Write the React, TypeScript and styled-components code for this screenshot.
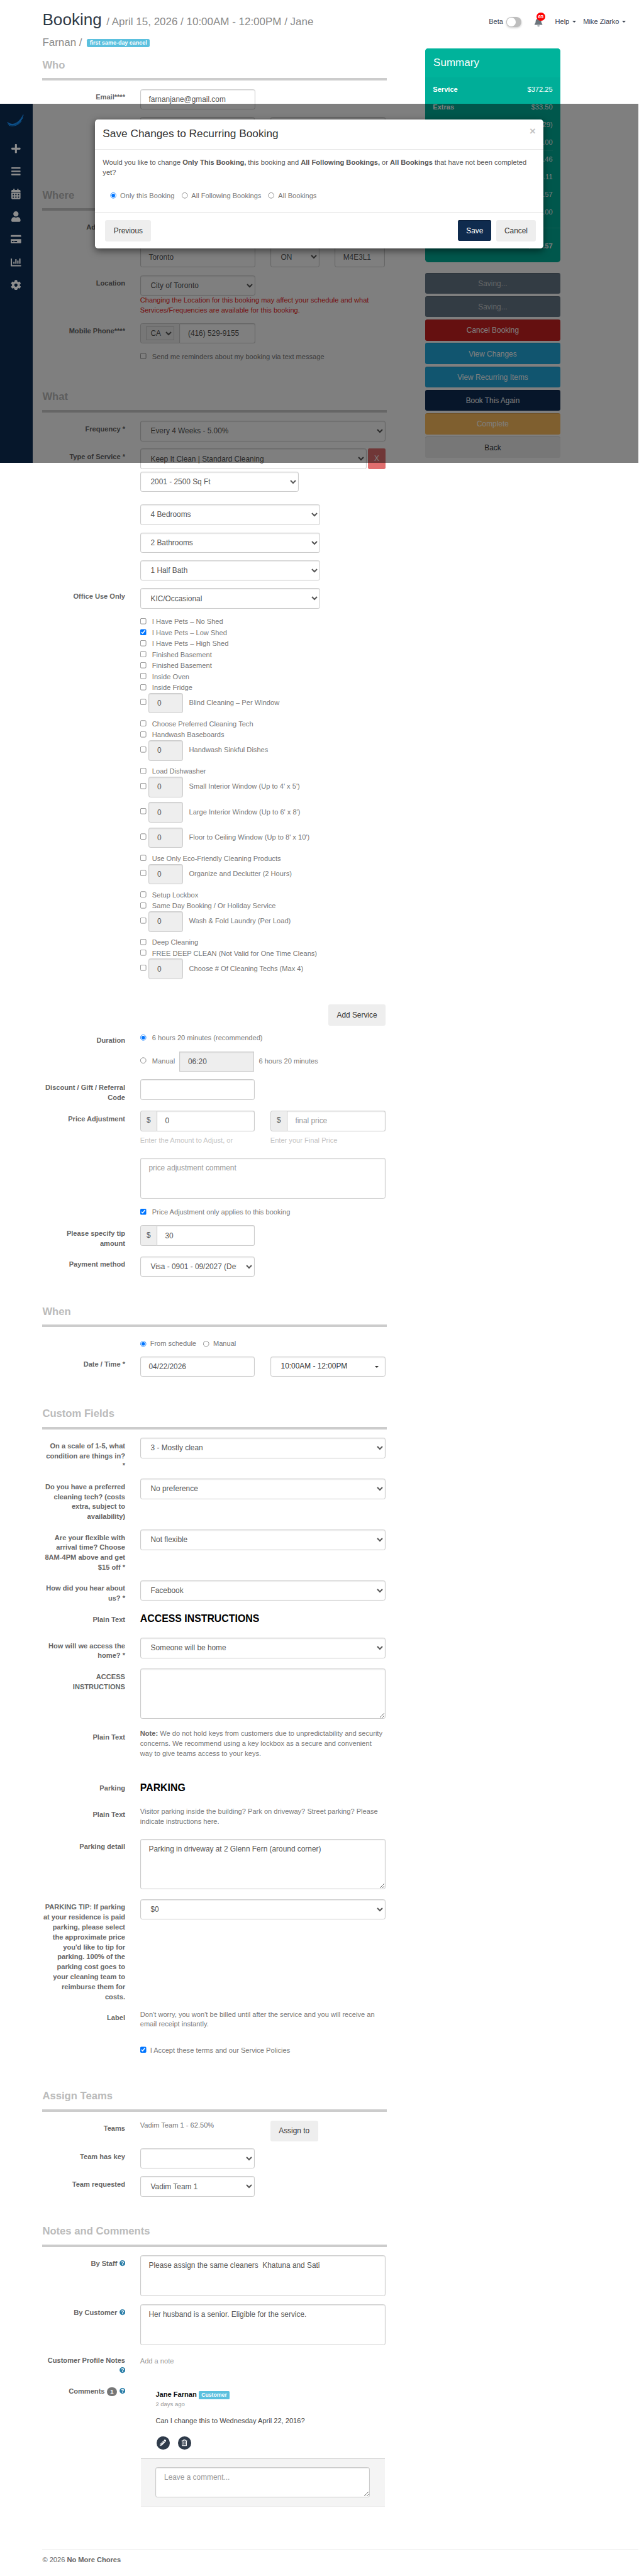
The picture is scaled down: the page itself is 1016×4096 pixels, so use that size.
import React from 'react'
import styled, { createGlobalStyle } from 'styled-components'
import {
  FaBars,
  FaBell,
  FaCalendarAlt,
  FaChartBar,
  FaCog,
  FaCreditCard,
  FaPencilAlt,
  FaPlus,
  FaQuestionCircle,
  FaRegTrashAlt,
  FaUser
} from 'react-icons/fa'

const GlobalStyle = createGlobalStyle`
  html, body {
    margin: 0;
    padding: 0;
    background: #fff;
  }
  body {
    font-family: "Liberation Sans", Arial, sans-serif;
    font-size: 14px;
    line-height: 20px;
    color: #555;
  }
  * {
    box-sizing: border-box;
  }
`

// everything below is measured in reference pixels, the zoom brings it to window size
const Page = styled.div`
  zoom: 0.793;
  position: relative;
  width: 1280px;
  height: 5161px;
  overflow: hidden;
  background: #fff;
`

const Header = styled.header`
  display: flex;
  justify-content: space-between;
  align-items: flex-start;
  height: 97px;
  padding: 22px 25px 0 85px;
`

const PageTitle = styled.h1`
  width: 570px;
  margin: 0;
  font-size: 33px;
  font-weight: 400;
  line-height: 36px;
  color: #2f3a46;
`

const TitleMeta = styled.small`
  font-size: 21.4px;
  color: #8a8a8a;
`

const TitleBadge = styled.span`
  display: inline-block;
  padding: 0 6px;
  height: 16px;
  line-height: 16px;
  font-size: 11.3px;
  font-weight: 700;
  color: #fff;
  background: #5bc0de;
  border-radius: 3px;
  vertical-align: 2px;
`

const TopNav = styled.nav`
  display: flex;
  align-items: center;
  height: 44px;
  color: #3c4452;
`

const Toggle = styled.span`
  position: relative;
  width: 31px;
  height: 21px;
  margin: 0 25px 0 6px;
  border-radius: 11px;
  background: #bdbdbd;
  box-shadow: 0 2px 4px rgba(0, 0, 0, 0.2);

  &::after {
    content: '';
    position: absolute;
    top: 2px;
    left: 2px;
    width: 17px;
    height: 17px;
    border-radius: 50%;
    background: #fff;
  }
`

const BellWrap = styled.span`
  position: relative;
  display: flex;
  width: 18px;
  margin-right: 24px;
  color: #6c757d;
`

const BellCount = styled.span`
  position: absolute;
  top: -10px;
  left: 5px;
  width: 17px;
  height: 17px;
  border-radius: 50%;
  background: #f00;
  color: #fff;
  font-size: 10px;
  font-weight: 700;
  line-height: 17px;
  text-align: center;
`

const NavLink = styled.span`
  display: inline-flex;
  align-items: center;
  margin-right: 14px;

  &:last-child {
    margin-right: 0;
  }

  &::after {
    content: '';
    margin-left: 6px;
    border-top: 4px solid #3c4452;
    border-left: 4px solid transparent;
    border-right: 4px solid transparent;
  }
`

const Layout = styled.div`
  display: flex;
  align-items: flex-start;
  padding-left: 85px;
`

const Main = styled.main`
  width: 691px;
  padding-top: 22.5px;
`

const SectionTitle = styled.h3<{ $top?: number }>`
  margin: ${(p) => p.$top ?? 0}px 0 14.5px;
  font-size: 21px;
  font-weight: 700;
  line-height: 23px;
  color: #bbb;
`

const Rule = styled.div`
  height: 5px;
  margin-bottom: 17px;
  background: #ccc;
`

const Row = styled.div<{ $mb?: number }>`
  display: grid;
  grid-template-columns: 166px 492px;
  column-gap: 30px;
  margin-bottom: ${(p) => p.$mb ?? 15}px;
`

const Label = styled.label<{ $flush?: boolean }>`
  display: block;
  padding-top: ${(p) => (p.$flush ? 0 : 7)}px;
  font-weight: 700;
  line-height: 20px;
  text-align: right;
  color: #666;
`

const HelpIcon = styled(FaQuestionCircle)`
  width: 12px;
  height: 14px;
  margin-left: 4px;
  color: #2b7ea8;
  vertical-align: -2px;
`

const CountBadge = styled.span`
  display: inline-block;
  width: 21px;
  height: 18px;
  margin-left: 4px;
  border-radius: 9px;
  background: #777;
  color: #fff;
  font-size: 12px;
  line-height: 18px;
  text-align: center;
`

const Split = styled.div`
  display: grid;
  grid-template-columns: 230px 231px;
  column-gap: 31px;
`

const CityGrid = styled.div`
  display: grid;
  grid-template-columns: 231px 99px 101px;
  column-gap: 30px;
`

const Input = styled.input<{ $width?: number }>`
  display: block;
  width: ${(p) => (p.$width ? `${p.$width}px` : '100%')};
  height: 41px;
  padding: 6px 16px;
  border: 1px solid #ccc;
  border-radius: 4px;
  background: #fff;
  box-shadow: inset 0 1px 2px rgba(0, 0, 0, 0.12);
  font: 15px "Liberation Sans", Arial, sans-serif;
  color: #555;

  &::placeholder {
    color: #999;
  }

  &:disabled {
    background: #eee;
    opacity: 1;
  }
`

const Select = styled.select<{ $width?: number }>`
  display: block;
  width: ${(p) => (p.$width ? `${p.$width}px` : '100%')};
  height: 41px;
  padding: 6px 16px;
  border: 1px solid #ccc;
  border-radius: 4px;
  background: #fff;
  box-shadow: inset 0 1px 2px rgba(0, 0, 0, 0.12);
  font: 15px "Liberation Sans", Arial, sans-serif;
  color: #555;
`

const Textarea = styled.textarea<{ $height: number; $resize?: boolean; $top?: number }>`
  display: block;
  width: 100%;
  height: ${(p) => p.$height}px;
  margin-top: ${(p) => p.$top ?? 0}px;
  padding: 10px 16px;
  border: 1px solid #ccc;
  border-radius: 4px;
  background: #fff;
  box-shadow: inset 0 1px 2px rgba(0, 0, 0, 0.12);
  font: 15px/20px "Liberation Sans", Arial, sans-serif;
  color: #555;
  resize: ${(p) => (p.$resize ? 'both' : 'none')};

  &::placeholder {
    color: #999;
  }
`

const InputGroup = styled.div<{ $width?: number }>`
  display: flex;
  width: ${(p) => (p.$width ? `${p.$width}px` : '100%')};
  height: 41px;

  ${Input} {
    flex: 1;
    min-width: 0;
    border-left: 0;
    border-radius: 0 4px 4px 0;
  }
`

const Addon = styled.span`
  display: flex;
  align-items: center;
  justify-content: center;
  width: 34px;
  border: 1px solid #ccc;
  border-radius: 4px 0 0 4px;
  background: #eee;
  font-size: 15px;
  color: #555;
`

const PhoneAddon = styled(Addon)`
  width: 80px;

  ${Select} {
    width: 56px;
    height: 28px;
    padding: 0 4px;
    border-radius: 0;
    box-shadow: none;
    background: #eee;
  }
`

const CheckLine = styled.label<{ $gap?: number; $top?: number }>`
  display: flex;
  align-items: center;
  min-height: 22px;
  margin-top: ${(p) => p.$top ?? 0}px;
  color: #777;

  input {
    flex: none;
    width: 13px;
    height: 13px;
    margin: -3px ${(p) => p.$gap ?? 11}px 0 0;
  }
`

const RadioGroup = styled.div<{ $top?: number }>`
  display: flex;
  align-items: center;
  height: 20px;
  margin-top: ${(p) => p.$top ?? 0}px;
  color: #777;

  label {
    display: flex;
    align-items: center;
    margin-right: 14px;
  }

  input {
    width: 13px;
    height: 13px;
    margin: 0 7px 0 0;
  }
`

const ExtraRow = styled.div`
  display: flex;
  align-items: center;
  margin: -1px 0 11px;
  color: #777;

  input[type='checkbox'] {
    flex: none;
    width: 13px;
    height: 13px;
    margin: -4px 4px 0 0;
  }

  ${Input} {
    width: 69px;
    margin-right: 12px;
  }
`

const AddServiceBar = styled.div`
  display: flex;
  justify-content: flex-end;
  width: 688px;
  margin: 39px 0 14px;
`

const GrayButton = styled.button<{ $height: number }>`
  height: ${(p) => p.$height}px;
  padding: 0 17px;
  border: 0;
  border-radius: 4px;
  background: #eee;
  font: 15px "Liberation Sans", Arial, sans-serif;
  color: #333;
`

const ManualRow = styled.div`
  display: flex;
  align-items: center;
  margin-top: 15px;
  color: #777;

  input[type='radio'] {
    width: 13px;
    height: 13px;
    margin: -4px 11px 0 0;
  }

  ${Input} {
    width: 150px;
    margin: 0 9px;
    border-radius: 0;
  }
`

const FreqGroup = styled.div`
  display: flex;
  gap: 3px;
`

const RemoveButton = styled.span`
  flex: none;
  display: flex;
  align-items: center;
  justify-content: center;
  width: 35px;
  height: 41px;
  border-radius: 3px;
  background: #e06e6e;
  color: #fff;
  font-size: 15px;
`

const ErrorText = styled.div`
  width: 480px;
  color: #e81a1a;
`

const HelpText = styled.div`
  margin-top: 9px;
  color: #c4c4c4;
`

const TimeDropdown = styled.div`
  display: flex;
  align-items: center;
  justify-content: space-between;
  height: 41px;
  padding: 0 13px 0 20px;
  border: 1px solid #ccc;
  border-radius: 4px;
  box-shadow: inset 0 1px 2px rgba(0, 0, 0, 0.12);
  font-size: 15px;
  color: #333;

  &::after {
    content: '';
    border-top: 4px solid #333;
    border-left: 4px solid transparent;
    border-right: 4px solid transparent;
  }
`

const StaticHeading = styled.h4`
  height: 38px;
  margin: 0;
  font-size: 20px;
  font-weight: 700;
  line-height: 30px;
  color: #000;
`

const StaticText = styled.div`
  color: #777;

  strong {
    color: #666;
  }
`

const TeamName = styled.div`
  color: #777;
`

const NoteLink = styled.div`
  margin-top: 8px;
  color: #999;
`

const Comment = styled.div`
  padding: 14px 0 0 31px;
`

const CommentAuthor = styled.div`
  display: flex;
  align-items: center;
  font-weight: 700;
  color: #111;
`

const CustomerBadge = styled.span`
  width: 62px;
  height: 17px;
  margin-left: 4px;
  border-radius: 2px;
  background: #5bc0de;
  color: #fff;
  font-size: 11px;
  line-height: 17px;
  text-align: center;
`

const CommentTime = styled.div`
  margin-top: -2px;
  font-size: 12px;
  color: #999;
`

const CommentBody = styled.div`
  margin-top: 14px;
  color: #444;
`

const CommentActions = styled.div`
  display: flex;
  gap: 17px;
  margin: 21px 0 18px 2px;
`

const RoundIcon = styled.span`
  display: flex;
  align-items: center;
  justify-content: center;
  width: 26px;
  height: 26px;
  border-radius: 50%;
  background: #2f3b4a;
  color: #fff;
  font-size: 13px;
`

const CommentBox = styled.div`
  width: 490px;
  margin-left: 1px;
  padding: 16px 30px 17px;
  border-top: 1px solid #ccc;
  border-bottom: 1px solid #eee;
  background: #f4f4f4;
`

const Aside = styled.aside`
  width: 270px;
  margin-left: 77px;
`

const Summary = styled.section`
  height: 429px;
  margin-bottom: 21px;
  border-radius: 6px;
  overflow: hidden;
  background: #00ae98;
  color: #fff;
`

const SummaryHead = styled.h3`
  display: flex;
  align-items: center;
  height: 58px;
  margin: 0;
  padding-left: 16px;
  background: #00b39b;
  font-size: 21.5px;
  font-weight: 400;
`

const SummaryBody = styled.div`
  padding-top: 7.5px;
`

const SummaryRow = styled.div<{ $divided?: boolean }>`
  display: flex;
  justify-content: space-between;
  height: 35.2px;
  margin: 0 15px;
  line-height: 35px;
  border-bottom: ${(p) => (p.$divided ? '1px solid rgba(255, 255, 255, 0.1)' : '0')};

  strong {
    font-weight: 700;
  }
`

const SummaryTotal = styled.div`
  display: flex;
  justify-content: space-between;
  margin-top: 12px;
  padding: 27px 15px 0;
  border-top: 1px solid rgba(255, 255, 255, 0.12);
  font-weight: 700;
`

const ActionStack = styled.div`
  display: flex;
  flex-direction: column;
  gap: 5px;
`

const ActionButton = styled.button<{ $bg: string; $fg?: string }>`
  height: 42px;
  border: 0;
  border-top: 1px solid rgba(0, 0, 0, 0.12);
  border-radius: 4px;
  background: ${(p) => p.$bg};
  font: 15px "Liberation Sans", Arial, sans-serif;
  color: ${(p) => p.$fg ?? '#fff'};
`

const Footer = styled.footer`
  margin: 85px 0 0 85px;
  padding-top: 11px;
  border-top: 1px solid #eee;
  color: #666;
`

const Backdrop = styled.div`
  position: absolute;
  top: 208px;
  left: 0;
  width: 100%;
  height: 720px;
  background: rgba(0, 0, 0, 0.5);
`

const Sidebar = styled.div`
  position: absolute;
  top: 208px;
  left: 0;
  display: flex;
  flex-direction: column;
  align-items: center;
  width: 65px;
  height: 720px;
  padding-top: 20px;
  background: #06172b;
  color: #8e8e8e;
`

const SideLogo = styled.svg`
  width: 36px;
  height: 26px;
  margin-bottom: 21px;
`

const SideItem = styled.span`
  display: flex;
  align-items: center;
  justify-content: center;
  height: 45.6px;
  font-size: 21px;
`

const Modal = styled.div`
  position: absolute;
  top: 239px;
  left: 191px;
  width: 898px;
  height: 259px;
  border-radius: 6px;
  background: #fff;
  box-shadow: 0 5px 15px rgba(0, 0, 0, 0.5);
`

const ModalHead = styled.div`
  display: flex;
  justify-content: space-between;
  height: 61px;
  padding: 15px 15px 0;
  border-bottom: 1px solid #e5e5e5;
`

const ModalTitle = styled.h4`
  margin: 0;
  font-size: 21.8px;
  font-weight: 400;
  line-height: 30px;
  color: #333;
`

const ModalClose = styled.span`
  font-size: 21px;
  font-weight: 700;
  line-height: 20px;
  color: #c4c4c4;
`

const ModalBody = styled.div`
  height: 125px;
  padding: 15px 15px 0;
  color: #555;
  line-height: 20.5px;

  strong {
    font-weight: 700;
  }
`

const ModalOptions = styled(RadioGroup)`
  margin: 26px 0 0 15px;
`

const ModalFoot = styled.div`
  display: flex;
  align-items: flex-start;
  padding: 15px 14px 0 20px;
  border-top: 1px solid #e5e5e5;
`

const SaveButton = styled.button`
  width: 67px;
  height: 42px;
  margin: 0 9px 0 auto;
  border: 0;
  border-top: 1px solid #0a1f3a;
  border-radius: 3px;
  background: #0f2b4e;
  font: 15px "Liberation Sans", Arial, sans-serif;
  color: #fff;
`

interface Extra {
  label: string
  qty?: boolean
  checked?: boolean
}

const extras: Extra[] = [
  { label: 'I Have Pets – No Shed' },
  { label: 'I Have Pets – Low Shed', checked: true },
  { label: 'I Have Pets – High Shed' },
  { label: 'Finished Basement' },
  { label: 'Finished Basement' },
  { label: 'Inside Oven' },
  { label: 'Inside Fridge' },
  { label: 'Blind Cleaning – Per Window', qty: true },
  { label: 'Choose Preferred Cleaning Tech' },
  { label: 'Handwash Baseboards' },
  { label: 'Handwash Sinkful Dishes', qty: true },
  { label: 'Load Dishwasher' },
  { label: "Small Interior Window (Up to 4' x 5')", qty: true },
  { label: "Large Interior Window (Up to 6' x 8')", qty: true },
  { label: "Floor to Ceiling Window (Up to 8' x 10')", qty: true },
  { label: 'Use Only Eco-Friendly Cleaning Products' },
  { label: 'Organize and Declutter (2 Hours)', qty: true },
  { label: 'Setup Lockbox' },
  { label: 'Same Day Booking / Or Holiday Service' },
  { label: 'Wash & Fold Laundry (Per Load)', qty: true },
  { label: 'Deep Cleaning' },
  { label: 'FREE DEEP CLEAN (Not Valid for One Time Cleans)' },
  { label: 'Choose # Of Cleaning Techs (Max 4)', qty: true }
]

const summaryRows = [
  { label: 'Service', value: '$372.25', strong: true },
  { label: 'Extras', value: '$33.50', strong: true },
  { label: 'Discount', value: '($20.29)' },
  { label: 'Tip', value: '$30.00', divided: true },
  { label: 'Subtotal', value: '$415.46' },
  { label: 'Tax', value: '$54.11' },
  { label: 'Total', value: '$469.57' },
  { label: 'Paid', value: '$0.00' }
]

const actions = [
  { label: 'Saving...', bg: '#667888', fg: '#c8ccd0' },
  { label: 'Saving...', bg: '#667888', fg: '#c8ccd0' },
  { label: 'Cancel Booking', bg: '#ca2121' },
  { label: 'View Changes', bg: '#22aade' },
  { label: 'View Recurring Items', bg: '#22aade' },
  { label: 'Book This Again', bg: '#0e2c54' },
  { label: 'Complete', bg: '#ffbe5e' },
  { label: 'Back', bg: '#eee', fg: '#333' }
]

const SelectOf: React.FC<{ value: string; width?: number }> = ({ value, width }) => (
  <Select $width={width} defaultValue={value}>
    <option>{value}</option>
  </Select>
)

const Section: React.FC<{ title: string; top?: number }> = ({ title, top }) => (
  <>
    <SectionTitle $top={top}>{title}</SectionTitle>
    <Rule />
  </>
)

export default function App() {
  return (
    <Page>
      <GlobalStyle />
      <Header>
        <PageTitle>
          Booking <TitleMeta>/ April 15, 2026 / 10:00AM - 12:00PM / Jane Farnan /</TitleMeta>{' '}
          <TitleBadge>first same-day cancel</TitleBadge>
        </PageTitle>
        <TopNav>
          Beta
          <Toggle />
          <BellWrap>
            <FaBell size={18} />
            <BellCount>65</BellCount>
          </BellWrap>
          <NavLink>Help</NavLink>
          <NavLink>Mike Ziarko</NavLink>
        </TopNav>
      </Header>

      <Layout>
        <Main>
          <Section title="Who" />
          <Row>
            <Label>Email****</Label>
            <Input $width={231} defaultValue="farnanjane@gmail.com" />
          </Row>
          <Row $mb={0}>
            <Label>Name</Label>
            <Split>
              <Input defaultValue="Jane" />
              <Input defaultValue="Farnan" />
            </Split>
          </Row>

          <Section title="Where" top={104.5} />
          <Row $mb={14}>
            <Label>Address****</Label>
            <Input defaultValue="1 Main Street" />
          </Row>
          <Row $mb={16}>
            <Label />
            <CityGrid>
              <Input defaultValue="Toronto" />
              <SelectOf value="ON" />
              <Input defaultValue="M4E3L1" />
            </CityGrid>
          </Row>
          <Row>
            <Label>Location</Label>
            <div>
              <SelectOf value="City of Toronto" width={231} />
              <ErrorText>
                Changing the Location for this booking may affect your schedule and what
                Services/Frequencies are available for this booking.
              </ErrorText>
            </div>
          </Row>
          <Row $mb={17}>
            <Label>Mobile Phone****</Label>
            <InputGroup $width={231}>
              <PhoneAddon>
                <SelectOf value="CA" />
              </PhoneAddon>
              <Input defaultValue="(416) 529-9155" />
            </InputGroup>
          </Row>
          <Row $mb={0}>
            <Label $flush />
            <CheckLine $top={-1}>
              <input type="checkbox" />
              Send me reminders about my booking via text message
            </CheckLine>
          </Row>

          <Section title="What" top={57.5} />
          <Row>
            <Label>Frequency *</Label>
            <SelectOf value="Every 4 Weeks - 5.00%" />
          </Row>
          <Row $mb={5}>
            <Label>Type of Service *</Label>
            <FreqGroup>
              <SelectOf value="Keep It Clean | Standard Cleaning" />
              <RemoveButton>X</RemoveButton>
            </FreqGroup>
          </Row>
          <Row $mb={25}>
            <Label />
            <SelectOf value="2001 - 2500 Sq Ft" width={318} />
          </Row>
          <Row>
            <Label />
            <SelectOf value="4 Bedrooms" width={361} />
          </Row>
          <Row>
            <Label />
            <SelectOf value="2 Bathrooms" width={361} />
          </Row>
          <Row>
            <Label />
            <SelectOf value="1 Half Bath" width={361} />
          </Row>
          <Row $mb={16}>
            <Label>Office Use Only</Label>
            <SelectOf value="KIC/Occasional" width={361} />
          </Row>
          <Row $mb={0}>
            <Label $flush />
            <div>
              {extras.map((extra, i) =>
                extra.qty ? (
                  <ExtraRow key={i}>
                    <input type="checkbox" />
                    <Input disabled defaultValue="0" />
                    {extra.label}
                  </ExtraRow>
                ) : (
                  <CheckLine key={i}>
                    <input type="checkbox" defaultChecked={extra.checked} />
                    {extra.label}
                  </CheckLine>
                )
              )}
            </div>
          </Row>
          <AddServiceBar>
            <GrayButton $height={43}>Add Service</GrayButton>
          </AddServiceBar>

          <Row>
            <Label>Duration</Label>
            <div>
              <CheckLine $top={1}>
                <input type="radio" name="duration" defaultChecked />6 hours 20 minutes (recommended)
              </CheckLine>
              <ManualRow>
                <input type="radio" name="duration" />
                Manual
                <Input disabled defaultValue="06:20" />6 hours 20 minutes
              </ManualRow>
            </div>
          </Row>
          <Row $mb={16}>
            <Label>Discount / Gift / Referral Code</Label>
            <Input $width={230} />
          </Row>
          <Row>
            <Label>Price Adjustment</Label>
            <div>
              <Split>
                <div>
                  <InputGroup>
                    <Addon>$</Addon>
                    <Input defaultValue="0" />
                  </InputGroup>
                  <HelpText>Enter the Amount to Adjust, or</HelpText>
                </div>
                <div>
                  <InputGroup>
                    <Addon>$</Addon>
                    <Input placeholder="final price" />
                  </InputGroup>
                  <HelpText>Enter your Final Price</HelpText>
                </div>
              </Split>
              <Textarea $height={81} $top={25} placeholder="price adjustment comment" />
              <CheckLine $top={17}>
                <input type="checkbox" defaultChecked />
                Price Adjustment only applies to this booking
              </CheckLine>
            </div>
          </Row>
          <Row>
            <Label>Please specify tip amount</Label>
            <InputGroup $width={230}>
              <Addon>$</Addon>
              <Input defaultValue="30" />
            </InputGroup>
          </Row>
          <Row $mb={0}>
            <Label>Payment method</Label>
            <SelectOf value="Visa - 0901 - 09/2027 (Default)" width={230} />
          </Row>

          <Section title="When" top={58.5} />
          <Row $mb={15}>
            <Label $flush />
            <RadioGroup $top={7}>
              <label>
                <input type="radio" name="when" defaultChecked />
                From schedule
              </label>
              <label>
                <input type="radio" name="when" />
                Manual
              </label>
            </RadioGroup>
          </Row>
          <Row $mb={0}>
            <Label>Date / Time *</Label>
            <Split>
              <Input defaultValue="04/22/2026" />
              <TimeDropdown>10:00AM - 12:00PM</TimeDropdown>
            </Split>
          </Row>

          <Section title="Custom Fields" top={62.5} />
          <Row>
            <Label>On a scale of 1-5, what condition are things in? *</Label>
            <SelectOf value="3 - Mostly clean" />
          </Row>
          <Row>
            <Label>
              Do you have a preferred cleaning tech? (costs extra, subject to availability)
            </Label>
            <SelectOf value="No preference" />
          </Row>
          <Row>
            <Label>Are your flexible with arrival time? Choose 8AM-4PM above and get $15 off *</Label>
            <SelectOf value="Not flexible" />
          </Row>
          <Row>
            <Label>How did you hear about us? *</Label>
            <SelectOf value="Facebook" />
          </Row>
          <Row>
            <Label>Plain Text</Label>
            <StaticHeading>ACCESS INSTRUCTIONS</StaticHeading>
          </Row>
          <Row>
            <Label>How will we access the home? *</Label>
            <SelectOf value="Someone will be home" />
          </Row>
          <Row $mb={20}>
            <Label>ACCESS INSTRUCTIONS</Label>
            <Textarea $height={101} $resize />
          </Row>
          <Row $mb={43}>
            <Label>Plain Text</Label>
            <StaticText>
              <strong>Note:</strong> We do not hold keys from customers due to unpredictability and
              security concerns. We recommend using a key lockbox as a secure and convenient way to
              give teams access to your keys.
            </StaticText>
          </Row>
          <Row>
            <Label>Parking</Label>
            <StaticHeading>PARKING</StaticHeading>
          </Row>
          <Row $mb={24}>
            <Label>Plain Text</Label>
            <StaticText>
              Visitor parking inside the building? Park on driveway? Street parking? Please indicate
              instructions here.
            </StaticText>
          </Row>
          <Row $mb={20}>
            <Label>Parking detail</Label>
            <Textarea
              $height={101}
              $resize
              defaultValue="Parking in driveway at 2 Glenn Fern (around corner)"
            />
          </Row>
          <Row>
            <Label>
              PARKING TIP: If parking at your residence is paid parking, please select the
              approximate price you'd like to tip for parking. 100% of the parking cost goes to your
              cleaning team to reimburse them for costs.
            </Label>
            <SelectOf value="$0" />
          </Row>
          <Row $mb={31}>
            <Label>Label</Label>
            <StaticText>
              Don't worry, you won't be billed until after the service and you will receive an email
              receipt instantly.
            </StaticText>
          </Row>
          <Row $mb={0}>
            <Label $flush />
            <CheckLine $gap={7}>
              <input type="checkbox" defaultChecked />I Accept these terms and our Service Policies
            </CheckLine>
          </Row>

          <Section title="Assign Teams" top={69.5} />
          <Row $mb={14}>
            <Label>Teams</Label>
            <Split>
              <TeamName>Vadim Team 1 - 62.50%</TeamName>
              <div>
                <GrayButton $height={42}>Assign to</GrayButton>
              </div>
            </Split>
          </Row>
          <Row>
            <Label>Team has key</Label>
            <SelectOf value="" width={230} />
          </Row>
          <Row $mb={0}>
            <Label>Team requested</Label>
            <SelectOf value="Vadim Team 1" width={230} />
          </Row>

          <Section title="Notes and Comments" top={58.5} />
          <Row $mb={16}>
            <Label>
              By Staff
              <HelpIcon />
            </Label>
            <Textarea $height={82} defaultValue="Please assign the same cleaners  Khatuna and Sati" />
          </Row>
          <Row $mb={14}>
            <Label>
              By Customer
              <HelpIcon />
            </Label>
            <Textarea $height={82} defaultValue="Her husband is a senior. Eligible for the service." />
          </Row>
          <Row>
            <Label>
              Customer Profile Notes
              <HelpIcon />
            </Label>
            <NoteLink>Add a note</NoteLink>
          </Row>
          <Row $mb={0}>
            <Label>
              Comments
              <CountBadge>1</CountBadge>
              <HelpIcon />
            </Label>
            <div>
              <Comment>
                <CommentAuthor>
                  Jane Farnan
                  <CustomerBadge>Customer</CustomerBadge>
                </CommentAuthor>
                <CommentTime>2 days ago</CommentTime>
                <CommentBody>Can I change this to Wednesday April 22, 2016?</CommentBody>
                <CommentActions>
                  <RoundIcon>
                    <FaPencilAlt />
                  </RoundIcon>
                  <RoundIcon>
                    <FaRegTrashAlt />
                  </RoundIcon>
                </CommentActions>
              </Comment>
              <CommentBox>
                <Textarea $height={61} $resize placeholder="Leave a comment..." />
              </CommentBox>
            </div>
          </Row>
        </Main>

        <Aside>
          <Summary>
            <SummaryHead>Summary</SummaryHead>
            <SummaryBody>
              {summaryRows.map((row) => (
                <SummaryRow key={row.label} $divided={row.divided}>
                  {row.strong ? <strong>{row.label}</strong> : <span>{row.label}</span>}
                  <span>{row.value}</span>
                </SummaryRow>
              ))}
              <SummaryTotal>
                <span>Balance</span>
                <span>$469.57</span>
              </SummaryTotal>
            </SummaryBody>
          </Summary>
          <ActionStack>
            {actions.map((action, i) => (
              <ActionButton key={i} $bg={action.bg} $fg={action.fg}>
                {action.label}
              </ActionButton>
            ))}
          </ActionStack>
        </Aside>
      </Layout>

      <Footer>
        © 2026 <strong>No More Chores</strong>
      </Footer>

      <Backdrop />

      <Sidebar>
        <SideLogo viewBox="0 0 36 26" fill="none">
          <path d="M1 17c7 7 22 6 32-15" stroke="#0f4f8a" strokeWidth="1.6" />
          <path d="M2 20c8 5 21 3 30-13" stroke="#0d5f9e" strokeWidth="1.4" />
          <path d="M4 23c8 3 18 1 25-9" stroke="#0b4a80" strokeWidth="1.4" />
        </SideLogo>
        <SideItem>
          <FaPlus />
        </SideItem>
        <SideItem>
          <FaBars />
        </SideItem>
        <SideItem>
          <FaCalendarAlt />
        </SideItem>
        <SideItem>
          <FaUser />
        </SideItem>
        <SideItem>
          <FaCreditCard />
        </SideItem>
        <SideItem>
          <FaChartBar />
        </SideItem>
        <SideItem>
          <FaCog />
        </SideItem>
      </Sidebar>

      <Modal>
        <ModalHead>
          <ModalTitle>Save Changes to Recurring Booking</ModalTitle>
          <ModalClose>×</ModalClose>
        </ModalHead>
        <ModalBody>
          Would you like to change <strong>Only This Booking,</strong> this booking and{' '}
          <strong>All Following Bookings,</strong> or <strong>All Bookings</strong> that have not
          been completed yet?
          <ModalOptions>
            <label>
              <input type="radio" name="scope" defaultChecked />
              Only this Booking
            </label>
            <label>
              <input type="radio" name="scope" />
              All Following Bookings
            </label>
            <label>
              <input type="radio" name="scope" />
              All Bookings
            </label>
          </ModalOptions>
        </ModalBody>
        <ModalFoot>
          <GrayButton $height={43}>Previous</GrayButton>
          <SaveButton>Save</SaveButton>
          <GrayButton $height={43}>Cancel</GrayButton>
        </ModalFoot>
      </Modal>
    </Page>
  )
}
